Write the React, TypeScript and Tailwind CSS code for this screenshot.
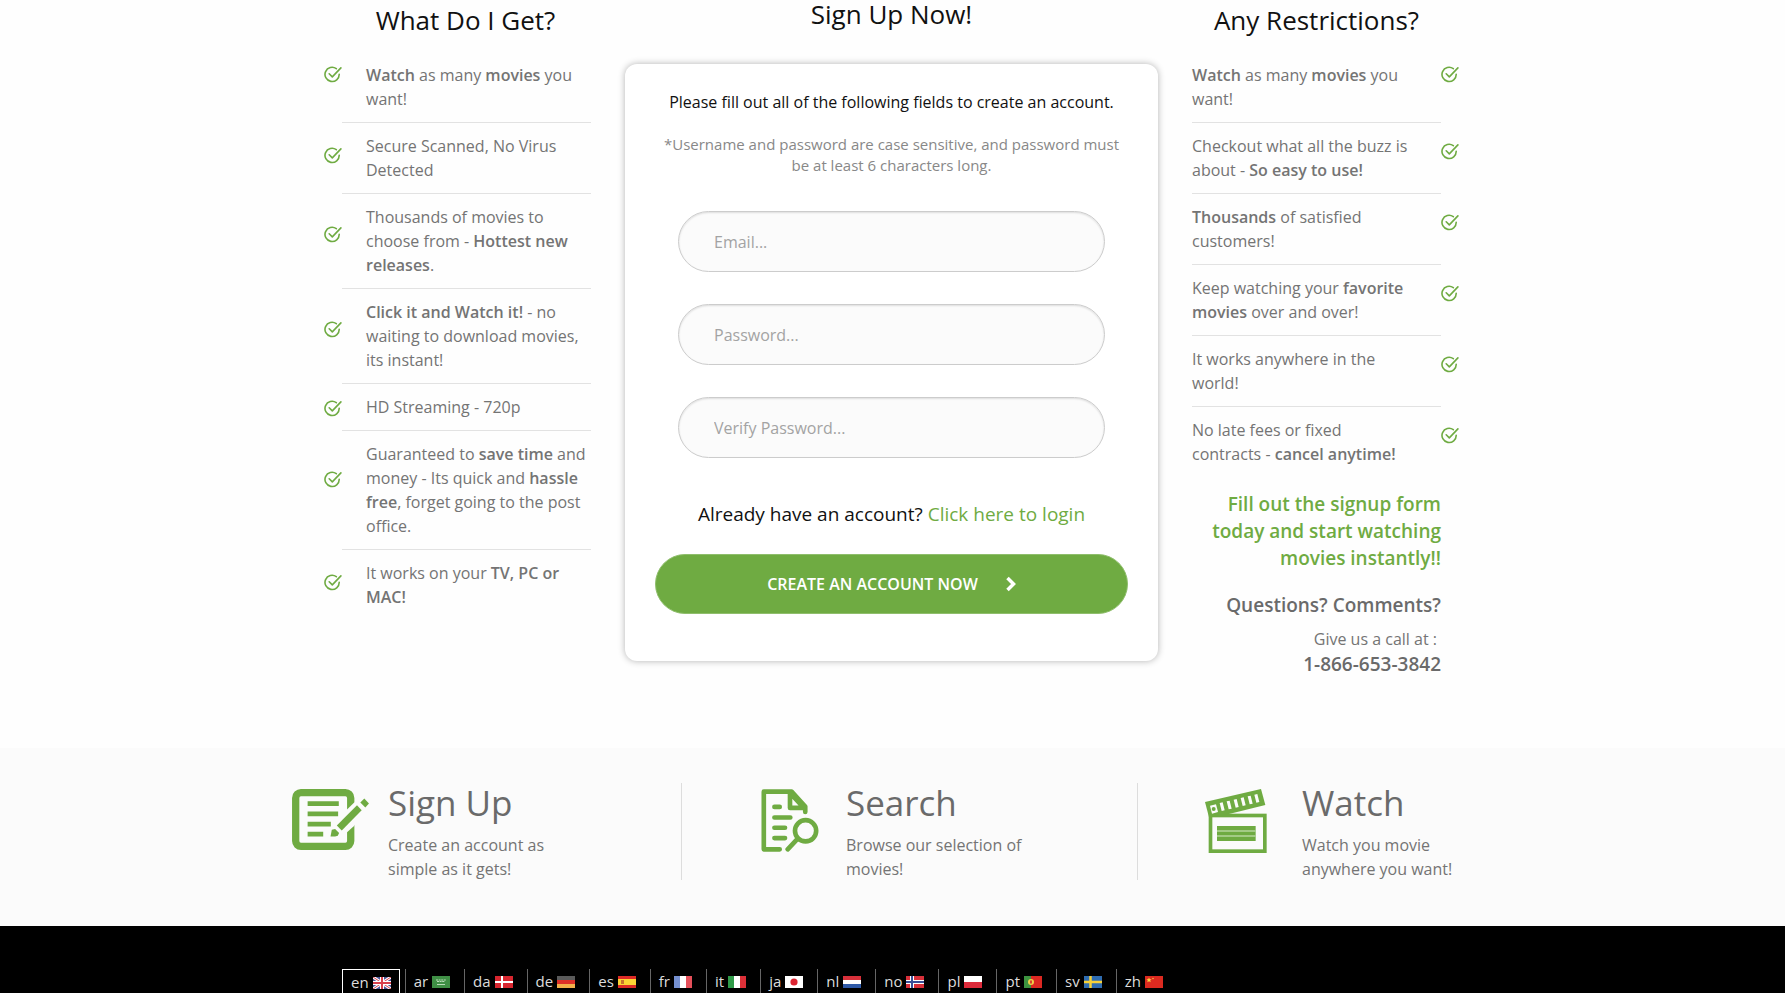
import type { ReactNode } from 'react'
import { clsx } from 'clsx'

const GREEN = '#6fab42'

type Item = { lines: 1 | 2 | 3 | 4; text: ReactNode }

const BENEFITS: Item[] = [
  { lines: 2, text: <><B>Watch</B> as many <B>movies</B> you want!</> },
  { lines: 2, text: <>Secure Scanned, No Virus Detected</> },
  { lines: 3, text: <>Thousands of movies to choose from - <B>Hottest new releases</B>.</> },
  { lines: 3, text: <><B>Click it and Watch it!</B> - no waiting to download movies, its instant!</> },
  { lines: 1, text: <>HD Streaming - 720p</> },
  { lines: 4, text: <>Guaranteed to <B>save time</B> and money - Its quick and <B>hassle free</B>, forget going to the post office.</> },
  { lines: 2, text: <>It works on your <B>TV, PC or MAC!</B></> },
]

const RESTRICTIONS: ReactNode[] = [
  <><B>Watch</B> as many <B>movies</B> you want!</>,
  <>Checkout what all the buzz is about - <B>So easy to use!</B></>,
  <><B>Thousands</B> of satisfied customers!</>,
  <>Keep watching your <B>favorite movies</B> over and over!</>,
  <>It works anywhere in the world!</>,
  <>No late fees or fixed contracts - <B>cancel anytime!</B></>,
]

// taller items push the tick further down
const TICK_OFFSET = { 1: 'mt-4', 2: 'mt-6', 3: 'mt-8', 4: 'mt-10' }

const FIELDS = [
  { id: 'email', type: 'email', label: 'Email...' },
  { id: 'password', type: 'password', label: 'Password...' },
  { id: 'verify', type: 'password', label: 'Verify Password...' },
]

const STEPS = [
  { title: 'Sign Up', text: 'Create an account as simple as it gets!', icon: <SignUpIcon />, pad: 'pl-[66px]' },
  { title: 'Search', text: 'Browse our selection of movies!', icon: <SearchIcon />, pad: 'pl-[79px]' },
  { title: 'Watch', text: 'Watch you movie anywhere you want!', icon: <WatchIcon />, pad: 'pl-[67px]' },
]

const LANGS: { code: string; flag: ReactNode }[] = [
  {
    code: 'en',
    flag: (
      <>
        <rect width="18" height="12" fill="#4a5598" />
        <path d="M0 0l18 12M18 0L0 12" stroke="#fff" strokeWidth="3" />
        <path d="M0 0l18 12M18 0L0 12" stroke="#d8404c" />
        <path d="M9 0v12M0 6h18" stroke="#fff" strokeWidth="4" />
        <path d="M9 0v12M0 6h18" stroke="#d8404c" strokeWidth="2" />
      </>
    ),
  },
  {
    code: 'ar',
    flag: (
      <>
        <rect width="18" height="12" fill="#3f8f45" />
        <path d="M4 4h10M5 5.5h8" stroke="#b9dcb9" strokeWidth="1" strokeDasharray="2 .6" />
        <path d="M5 8.5h8" stroke="#b9dcb9" />
      </>
    ),
  },
  { code: 'da', flag: <><rect width="18" height="12" fill="#d8262f" /><path d="M7 0v12M0 6h18" stroke="#fff" strokeWidth="2" /></> },
  { code: 'de', flag: <><rect width="18" height="12" fill="#5a5a5a" /><rect y="4" width="18" height="4" fill="#dd3028" /><rect y="8" width="18" height="4" fill="#f3b04a" /></> },
  { code: 'es', flag: <><rect width="18" height="12" fill="#dc2a26" /><rect y="3" width="18" height="6" fill="#fbd334" /><rect x="3" y="4" width="3" height="4" fill="#c8722c" /></> },
  { code: 'fr', flag: <><rect width="18" height="12" fill="#fff" /><rect width="6" height="12" fill="#7590d0" /><rect x="12" width="6" height="12" fill="#e5505a" /></> },
  { code: 'it', flag: <><rect width="18" height="12" fill="#fff" /><rect width="6" height="12" fill="#2f9a48" /><rect x="12" width="6" height="12" fill="#dc3038" /></> },
  { code: 'ja', flag: <><rect width="18" height="12" fill="#fff" /><circle cx="9" cy="6" r="3.6" fill="#dc2432" /></> },
  { code: 'nl', flag: <><rect width="18" height="12" fill="#fff" /><rect width="18" height="4" fill="#d8303a" /><rect y="8" width="18" height="4" fill="#2f5aa8" /></> },
  {
    code: 'no',
    flag: (
      <>
        <rect width="18" height="12" fill="#d8303a" />
        <path d="M6 0v12M0 6h18" stroke="#fff" strokeWidth="4" />
        <path d="M6 0v12M0 6h18" stroke="#3a5098" strokeWidth="2" />
      </>
    ),
  },
  { code: 'pl', flag: <><rect width="18" height="12" fill="#fff" /><rect y="6" width="18" height="6" fill="#dc2a3a" /></> },
  { code: 'pt', flag: <><rect width="18" height="12" fill="#dc2822" /><rect width="7" height="12" fill="#3d9440" /><circle cx="7" cy="6" r="3" fill="#f0d048" /><rect x="6" y="4.5" width="2" height="3" fill="#d84030" /></> },
  { code: 'sv', flag: <><rect width="18" height="12" fill="#2f6cb0" /><path d="M6.500 0v12M0 6h18" stroke="#f6d038" strokeWidth="2.500" /></> },
  { code: 'zh', flag: <><rect width="18" height="12" fill="#dc2a20" /><path d="M4 1.500l.8 1.700 1.800.1-1.400 1.200.5 1.800L4 5.300 2.300 6.300l.5-1.800L1.400 3.300l1.800-.1z" fill="#f8d840" /><circle cx="8" cy="2.500" r=".7" fill="#f8d840" /></> },
]

function B({ children }: { children: ReactNode }) {
  return <strong className="font-semibold">{children}</strong>
}

function Tick({ className }: { className?: string }) {
  return (
    <svg viewBox="0 0 18 17" className={clsx('h-[17px] w-[18px] shrink-0', className)} fill="none" stroke={GREEN} strokeWidth="1.600" strokeLinecap="round" strokeLinejoin="round">
      <path d="M12.300 2.700A7.100 7.100 0 1 0 15.200 8.200" />
      <path d="M5.200 7.800l3.100 3.100L16.900 1.900" />
    </svg>
  )
}

function SignUpIcon() {
  return (
    <svg viewBox="0 0 232 184" className="h-[61px] w-[77px]" fill={GREEN}>
      <rect x="11" y="11" width="166" height="162" rx="16" fill="none" stroke={GREEN} strokeWidth="22" />
      <path d="M186 42L212 22 240 50 186 112 140 154H106V120z" fill="#fbfbfb" />
      <path d="M47 37h94v14H47zM47 68h92v14H47zM47 99h70v14H47zM47 129h47v14H47z" />
      <path d="M196 49l14 15-60 61-15-15z" />
      <path d="M218 29l14 15-11 12-15-15z" />
      <path d="M120 123l10-2 12 12-4 8-8 2h-14z" />
    </svg>
  )
}

function SearchIcon() {
  return (
    <svg viewBox="0 0 174 190" className="h-[63px] w-[58px]" fill="none" stroke={GREEN} strokeWidth="14" strokeLinecap="round" strokeLinejoin="round">
      <path d="M56 182H8V8h84l41 45v16" />
      <path d="M87 12v45h42z" />
      <path d="M40 54h16M40 86h48M40 117h32M40 148h32" />
      <circle cx="134" cy="126" r="32" />
      <path d="M111 149l-31 33" />
    </svg>
  )
}

function WatchIcon() {
  return (
    <svg viewBox="0 0 186 192" className="h-16 w-[62px]">
      <rect x="16.500" y="79.500" width="163" height="107" fill="none" stroke={GREEN} strokeWidth="11" />
      <path d="M0 39L168 0l13 48L72 75l-60 10z" fill={GREEN} />
      <g fill="#fbfbfb">
        <path d="M15 50l18-4 6 23-18 5z" />
        <path d="M44 42l9-2 6 24-9 2zM65 37l9-2 6 24-9 2zM86 32l9-2 6 24-9 2zM107 27l9-2 6 24-9 2zM128 22l9-2 6 24-9 2zM148 17l9-2 6 24-9 2z" />
      </g>
      <circle cx="26" cy="60" r="6" fill={GREEN} />
      <path d="M36 111h116v45H36z" fill={GREEN} />
      <path d="M36 126h116M36 141h116" stroke="#b5d69c" strokeWidth="4" />
    </svg>
  )
}

function ColumnTitle({ children }: { children: ReactNode }) {
  return <h2 className="mb-3 text-center text-[26px] leading-10 text-[#111]">{children}</h2>
}

function Benefits() {
  return (
    <section>
      <div className="pl-4"><ColumnTitle>What Do I Get?</ColumnTitle></div>
      <ul>
        {BENEFITS.map((b, i) => (
          <li key={i} className="flex items-start">
            <Tick className={i === 0 ? 'mt-3.5' : TICK_OFFSET[b.lines]} />
            <p className={clsx('flex-1 py-[11px] pl-6', i < BENEFITS.length - 1 && 'border-b border-[#e2e2e2]')}>{b.text}</p>
          </li>
        ))}
      </ul>
    </section>
  )
}

function Restrictions() {
  return (
    <section>
      <div className="pr-[18px]"><ColumnTitle>Any Restrictions?</ColumnTitle></div>
      <ul>
        {RESTRICTIONS.map((text, i) => (
          <li key={i} className="flex items-start">
            <p className={clsx('flex-1 py-[11px] pr-7', i < RESTRICTIONS.length - 1 && 'border-b border-[#e2e2e2]')}>{text}</p>
            <Tick className={i === 0 ? 'mt-3.5' : 'mt-5'} />
          </li>
        ))}
      </ul>
      <div className="pr-[18px] text-right">
        <p className="mt-3.5 text-[19px] leading-[27px] text-[#6fab42]"><B>Fill out the signup form today and start watching movies instantly!!</B></p>
        <p className="mt-5 text-[19px] leading-[27px] text-[#6a6a6a]"><B>Questions? Comments?</B></p>
        <p className="mt-2 pr-1">Give us a call at :</p>
        <p className="text-[19px] leading-[27px] text-[#6a6a6a]"><B>1-866-653-3842</B></p>
      </div>
    </section>
  )
}

function SignUpForm() {
  return (
    <section>
      <h2 className="mb-9 text-center text-[26px] leading-7 text-[#111]">Sign Up Now!</h2>
      <form className="rounded-xl bg-white px-[30px] pt-[26px] pb-[47px] text-center shadow-[0_0_7px_rgba(0,0,0,0.3)]" onSubmit={(e) => e.preventDefault()}>
        <p className="text-[#111]">Please fill out all of the following fields to create an account.</p>
        <p className="mt-5 text-[15px] leading-[21px] text-[#888]">
          *Username and password are case sensitive, and password must be at least 6 characters long.
        </p>
        <div className="mx-[23px] mt-[35px] flex flex-col gap-8">
          {FIELDS.map((f) => (
            <input
              key={f.id}
              id={f.id}
              type={f.type}
              aria-label={f.label}
              placeholder={f.label}
              className="h-[61px] w-full rounded-full border border-[#ccc] bg-[#fbfbfb] px-[35px] shadow-[inset_0_1px_2px_rgba(0,0,0,0.12)] outline-none placeholder:text-[#a3a3a3]"
            />
          ))}
        </div>
        <p className="mt-[42px] text-[19px] leading-7 text-[#111]">
          Already have an account? <a href="#login" className="text-[#6fab42]">Click here to login</a>
        </p>
        <button type="submit" className="mt-[26px] flex h-[60px] w-full items-center justify-center gap-[28px] rounded-full border border-[#8fbe6c] bg-[#6fab42] text-white">
          <B>CREATE AN ACCOUNT NOW</B>
          <svg viewBox="0 0 10 16" className="h-4 w-[10px]" fill="none" stroke="currentColor" strokeWidth="3.500">
            <path d="M1.500 2l6 6-6 6" />
          </svg>
        </button>
      </form>
    </section>
  )
}

export default function App() {
  return (
    <div className="flex min-h-screen flex-col bg-[#fefefe] font-['Open_Sans',sans-serif] text-base text-[#747474]">
      <main className="mx-auto grid w-full max-w-[1137px] grid-cols-[267px_1fr_267px] gap-[34px] pr-0.5 pb-[70px]">
        <Benefits />
        <SignUpForm />
        <Restrictions />
      </main>

      <section className="bg-[#fbfbfb] pt-[35px] pb-[46px]">
        <div className="mx-auto grid w-full max-w-[1333px] grid-cols-[456px_456px_1fr]">
          {STEPS.map((s, i) => (
            <div key={s.title} className={clsx('flex h-[97px]', s.pad, i < 2 && 'border-r border-[#ddd]')}>
              <div className={clsx('shrink-0 pt-[6px]', i === 0 && 'w-24', i === 1 && 'w-[85px]', i === 2 && 'w-[97px]')}>{s.icon}</div>
              <div className="w-[190px]">
                <h3 className="mb-[10px] text-[35px] leading-10 text-[#6a6a6a]">{s.title}</h3>
                <p>{s.text}</p>
              </div>
            </div>
          ))}
        </div>
      </section>

      <footer className="flex-1 bg-black pt-[43px]">
        <ul className="mx-auto flex w-full max-w-[1101px] gap-[5px] text-[15px] leading-6 text-[#ddd]">
          {LANGS.map((l, i) => (
            <li key={l.code}>
              <a
                href={`#${l.code}`}
                className={clsx('flex h-6 items-center gap-1 border-x px-2', i === 0 ? 'border-t border-white' : 'border-r-transparent border-l-[#666]')}
              >
                {l.code}
                <svg viewBox="0 0 18 12" className="mt-0.5 h-3 w-[18px]">{l.flag}</svg>
              </a>
            </li>
          ))}
        </ul>
      </footer>
    </div>
  )
}
